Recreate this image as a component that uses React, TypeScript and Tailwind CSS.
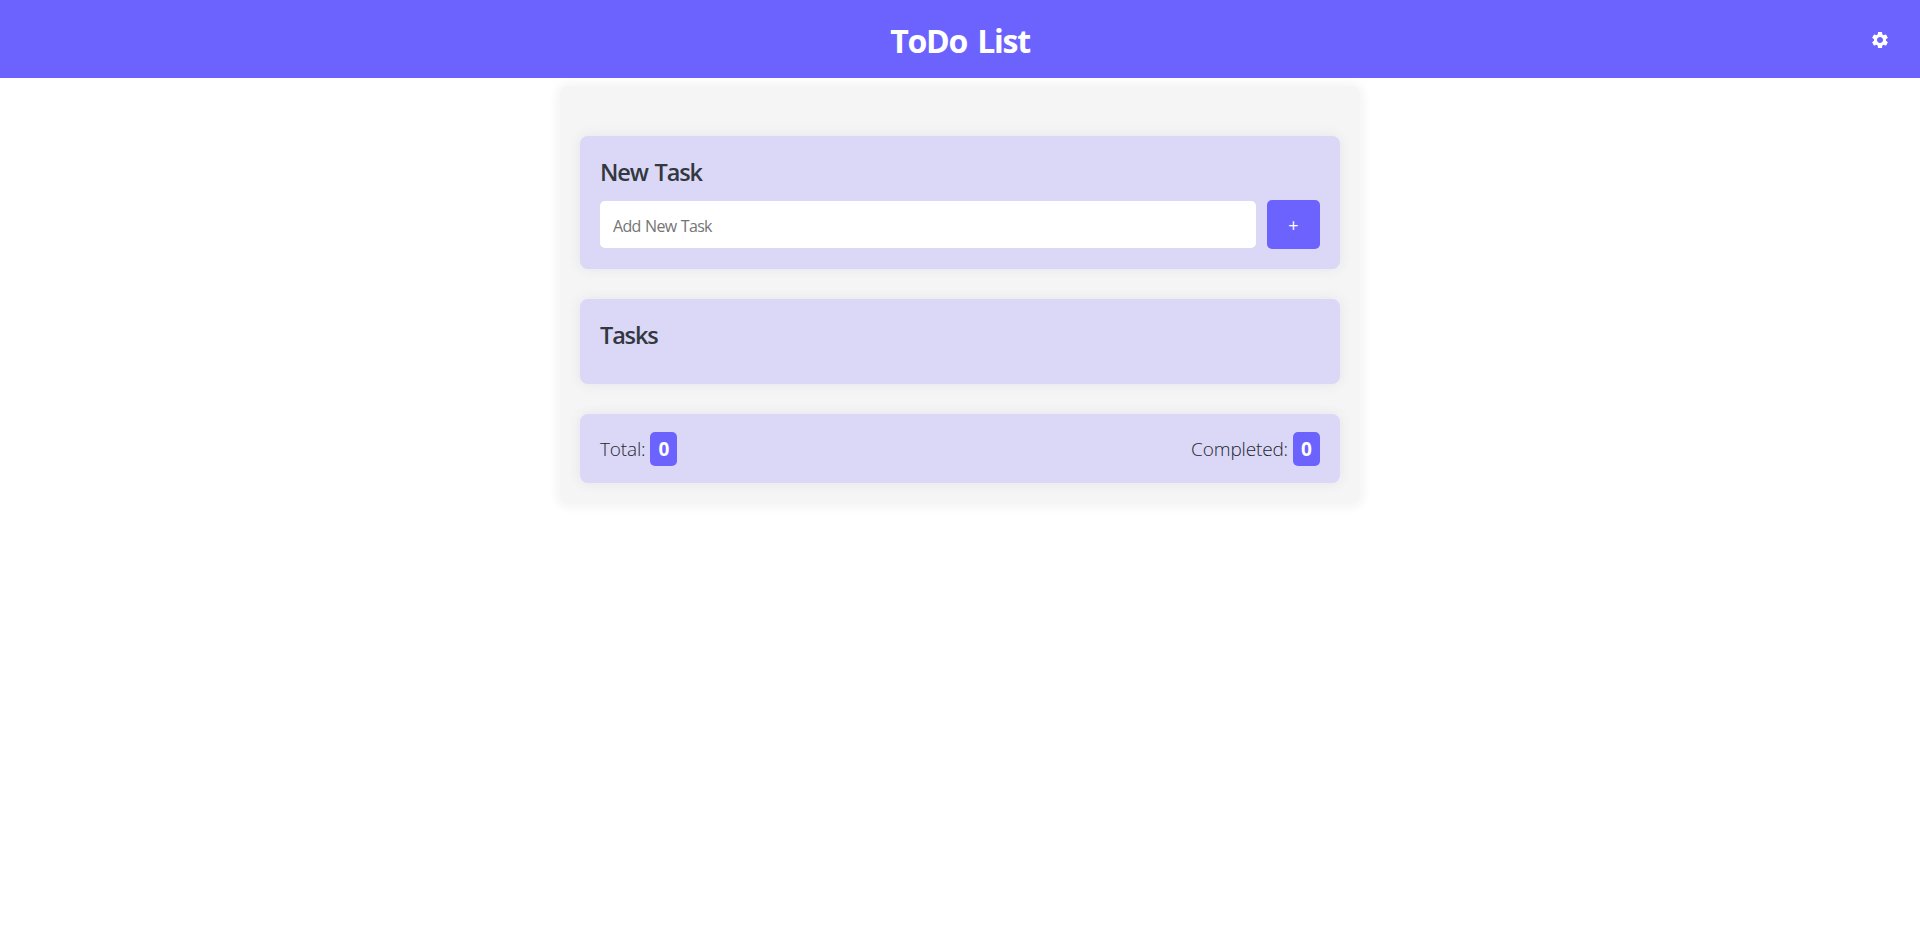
import { ReactNode } from "react";
import { MdSettings } from "react-icons/md";

function Card({ className, children }: { className: string; children: ReactNode }) {
  return (
    <section
      className={`rounded-lg bg-[#dad8f6] px-5 shadow-[0_0_12px_rgba(90,80,160,0.1)] ${className}`}
    >
      {children}
    </section>
  );
}

function CardTitle({ children }: { children: ReactNode }) {
  return (
    <h2 className="pt-px text-[23.5px] leading-[30px] font-semibold tracking-[-1.15px] [word-spacing:2px]">
      {children}
    </h2>
  );
}

function Stat({ label, value }: { label: string; value: number }) {
  return (
    <div className="flex items-center gap-[5px]">
      <span className="pt-[2px] text-[19px] font-light tracking-[-0.15px] whitespace-nowrap text-[#23262e]">
        {label}
      </span>
      <span className="flex h-[34px] w-[27px] items-center justify-center rounded-[5px] bg-[#6c63ff] pt-[2px] text-[19px] font-bold text-white">
        {value}
      </span>
    </div>
  );
}

export default function App() {
  return (
    <div className="min-h-[951px] bg-white font-['Open_Sans','Noto_Sans',sans-serif] text-[#333740]">
      <header className="relative grid h-[78px] grid-cols-[1fr_auto_1fr] items-center bg-[#6c63ff] px-[30px] text-white">
        <h1 className="col-start-2 pt-[3px] text-[32px] leading-10 font-bold tracking-[-1.25px] [word-spacing:3px]">
          ToDo List
        </h1>
        <button aria-label="Settings" className="mt-[2px] justify-self-end">
          <MdSettings className="size-5" />
        </button>
      </header>
      <main className="mx-auto mt-2 flex h-[417px] w-[800px] flex-col gap-[30px] rounded-lg bg-[#f5f5f5] px-5 pt-[50px] shadow-[0_1px_8px_4px_#f5f5f5]">
        <Card className="h-[133px] pt-5">
          <CardTitle>New Task</CardTitle>
          <div className="mt-[13px] flex items-center gap-[11px]">
            <input
              placeholder="Add New Task"
              className="h-[47px] min-w-0 flex-1 rounded-[5px] bg-white px-[13px] pt-[2px] text-[16px] tracking-[-0.7px] outline-none [word-spacing:1px] placeholder:text-[#757575]"
            />
            <button className="h-[49px] w-[53px] rounded-[5px] bg-[#6c63ff] pt-[2px] text-[18px] text-white">
              +
            </button>
          </div>
        </Card>
        <Card className="h-[85px] pt-5">
          <CardTitle>Tasks</CardTitle>
        </Card>
        <Card className="flex h-[69px] items-center justify-between">
          <Stat label="Total:" value={0} />
          <Stat label="Completed:" value={0} />
        </Card>
      </main>
    </div>
  );
}
